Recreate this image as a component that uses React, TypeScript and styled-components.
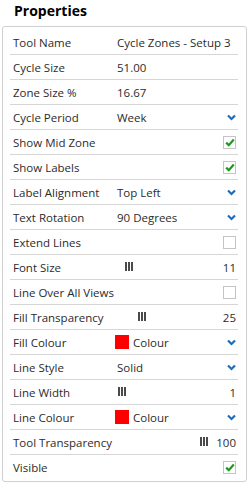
import styled, { createGlobalStyle } from "styled-components";

const GlobalStyle = createGlobalStyle`
  body {
    margin: 0;
    background: #fff;
    font-family: "Open Sans", "Liberation Sans", sans-serif;
    color: #2b2b2b;
  }
`;

/* Styled-Components */
const Wrapper = styled.div`
    width: 250px;
    height: 486px;
`;

const Title = styled.h2`
    margin: 0;
    height: 26px;
    padding-left: 14px;
    font-size: 14px;
    font-weight: 700;
    line-height: 22px;
    color: #000;
`;

const Panel = styled.div`
    margin-left: 2px;
    width: 228px;
    border: 1px solid #cfcfcf;
    border-radius: 3px;
    padding: 3px 8px 2px 7px;
`;

const Row = styled.div`
    display: grid;
    grid-template-columns: 104px 1fr auto;
    align-items: center;
    height: 24px;
    padding: 0 2px 0 3px;
    border-bottom: 1px solid #d6d6d6;
    font-size: 11.5px;
    &:last-child {
        border-bottom: 0;
    }
`;

const Label = styled.span`
    white-space: nowrap;
`;

const Value = styled.span`
    white-space: nowrap;
    display: flex;
    align-items: center;
`;

const Right = styled.span`
    display: flex;
    align-items: center;
    justify-content: flex-end;
`;

const Swatch = styled.span<{ color: string }>`
    width: 14px;
    height: 14px;
    margin: 0 4px 0 -2px;
    background: ${(props) => props.color};
`;

const Track = styled.span`
    position: relative;
    height: 24px;
    margin-right: 10px;
`;

const Thumb = styled.span`
    position: absolute;
    top: 7px;
    width: 8px;
    height: 9px;
    background: linear-gradient(
        to right,
        #4a4a4a 0 2px, transparent 2px 3px,
        #4a4a4a 3px 5px, transparent 5px 6px,
        #4a4a4a 6px 8px
    );
`;

const Check = styled.span`
    display: flex;
    align-items: center;
    justify-content: center;
    width: 11px;
    height: 11px;
    border: 1px solid #c4c4c4;
    background: #fff;
`;
/* end Styled-Components */

type Prop =
    | { label: string; kind: "text"; value: string }
    | { label: string; kind: "select"; value: string }
    | { label: string; kind: "check"; value: boolean }
    | { label: string; kind: "slider"; value: number; pos: number }
    | { label: string; kind: "colour"; value: string };

const props: Prop[] = [
    { label: "Tool Name", kind: "text", value: "Cycle Zones - Setup 3" },
    { label: "Cycle Size", kind: "text", value: "51.00" },
    { label: "Zone Size %", kind: "text", value: "16.67" },
    { label: "Cycle Period", kind: "select", value: "Week" },
    { label: "Show Mid Zone", kind: "check", value: true },
    { label: "Show Labels", kind: "check", value: true },
    { label: "Label Alignment", kind: "select", value: "Top Left" },
    { label: "Text Rotation", kind: "select", value: "90 Degrees" },
    { label: "Extend Lines", kind: "check", value: false },
    { label: "Font Size", kind: "slider", value: 11, pos: 8 },
    { label: "Line Over All Views", kind: "check", value: false },
    { label: "Fill Transparency", kind: "slider", value: 25, pos: 21 },
    { label: "Fill Colour", kind: "colour", value: "#ff0000" },
    { label: "Line Style", kind: "select", value: "Solid" },
    { label: "Line Width", kind: "slider", value: 1, pos: 1 },
    { label: "Line Colour", kind: "colour", value: "#ff0000" },
    { label: "Tool Transparency", kind: "slider", value: 100, pos: 83 },
    { label: "Visible", kind: "check", value: true },
];

const Chevron = () => (
    <svg width="9" height="7" viewBox="0 0 9 7">
        <path d="M1 1.5 L4.5 5 L8 1.5" fill="none" stroke="#1b6fb8" strokeWidth="2.2" />
    </svg>
);

const Tick = () => (
    <svg width="10" height="9" viewBox="0 0 10 9">
        <path d="M1.2 4.6 L3.8 7.2 L8.8 1.6" fill="none" stroke="#1a9a1a" strokeWidth="2.2" />
    </svg>
);

function PropRow({ p }: { p: Prop }) {
    if (p.kind === "text") {
        return (
            <Row>
                <Label>{p.label}</Label>
                <Value>{p.value}</Value>
                <span />
            </Row>
        );
    }
    if (p.kind === "select") {
        return (
            <Row>
                <Label>{p.label}</Label>
                <Value>{p.value}</Value>
                <Right><Chevron /></Right>
            </Row>
        );
    }
    if (p.kind === "colour") {
        return (
            <Row>
                <Label>{p.label}</Label>
                <Value><Swatch color={p.value} />Colour</Value>
                <Right><Chevron /></Right>
            </Row>
        );
    }
    if (p.kind === "check") {
        return (
            <Row style={{ gridTemplateColumns: "1fr auto" }}>
                <Label>{p.label}</Label>
                <Right><Check>{p.value && <Tick />}</Check></Right>
            </Row>
        );
    }
    return (
        <Row>
            <Label>{p.label}</Label>
            <Track>
                <Thumb style={{ left: `${p.pos}px` }} />
            </Track>
            <Right>{p.value}</Right>
        </Row>
    );
}

function App() {
    return (
        <Wrapper>
            <GlobalStyle />
            <Title>Properties</Title>
            <Panel>
                {props.map((p) => (
                    <PropRow key={p.label} p={p} />
                ))}
            </Panel>
        </Wrapper>
    );
}

export default App;
